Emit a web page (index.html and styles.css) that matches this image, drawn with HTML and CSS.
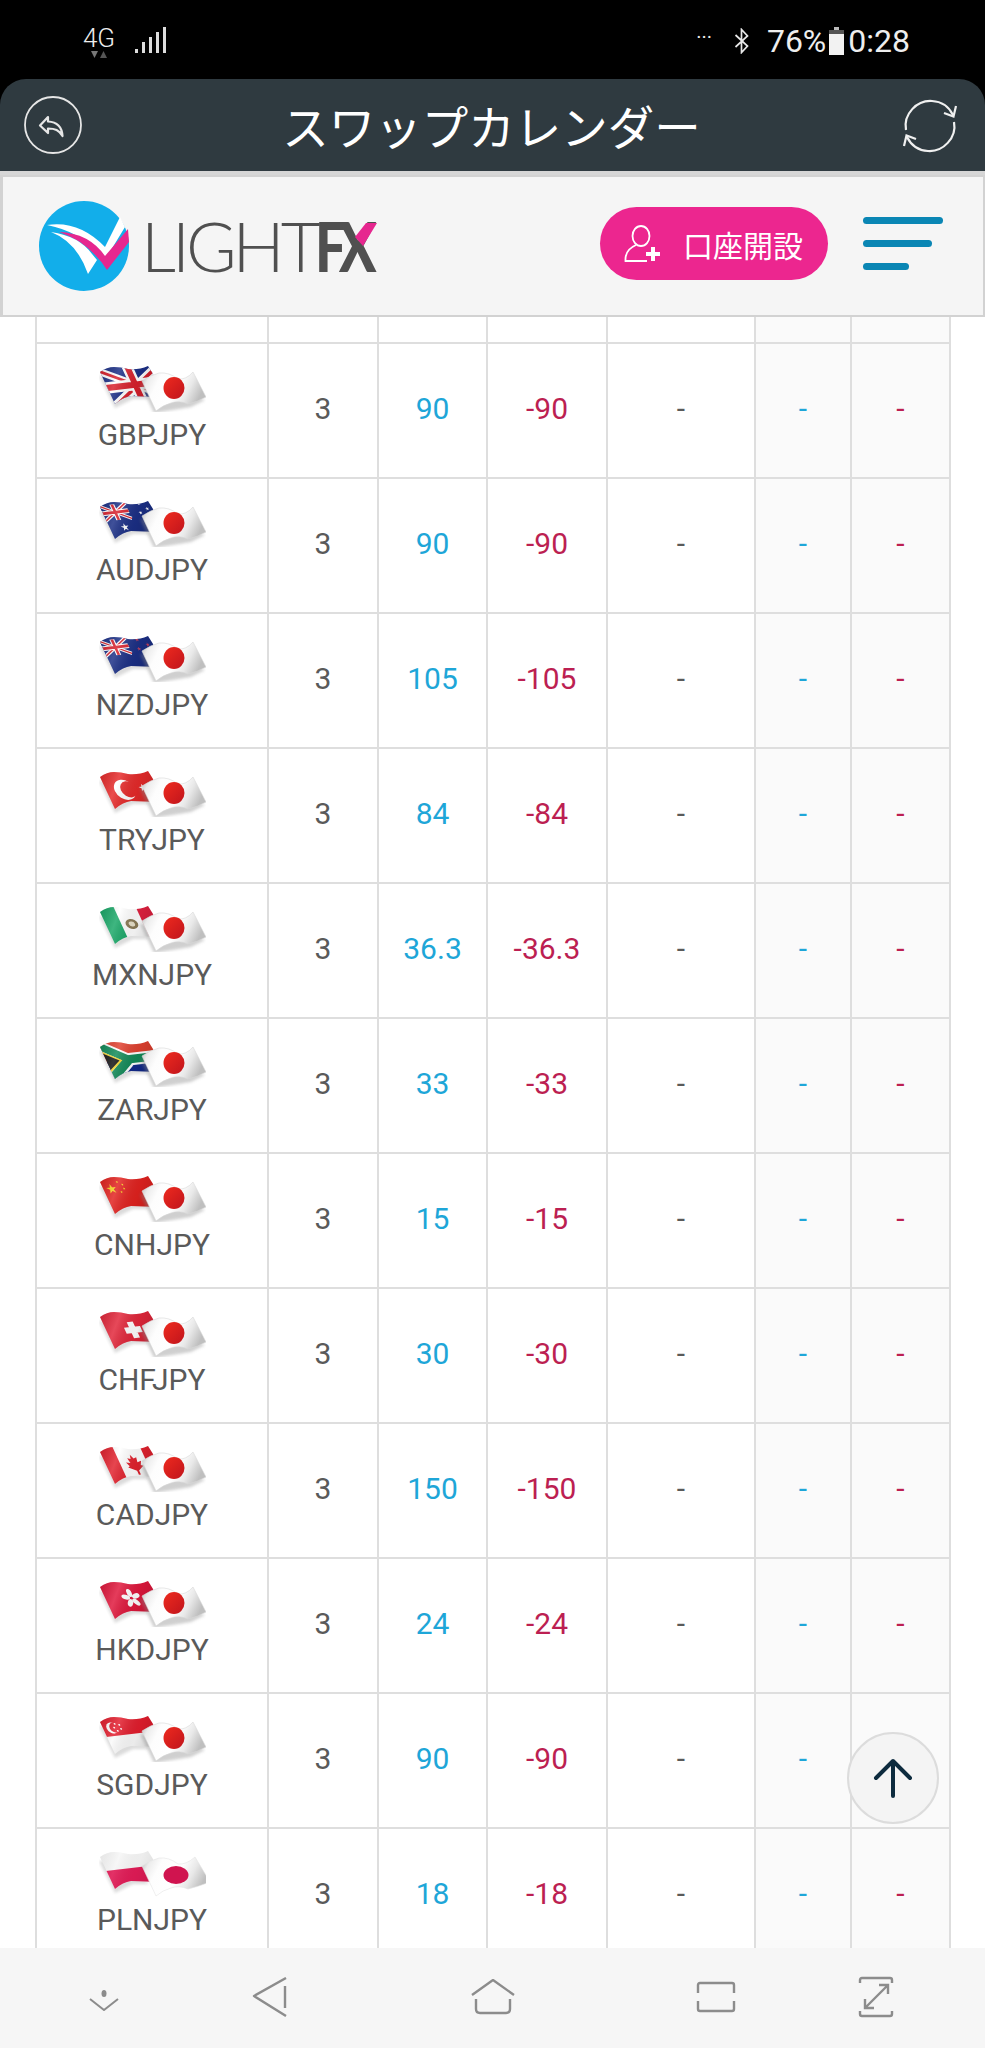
FILE: index.html
```html
<!DOCTYPE html>
<html lang="ja">
<head>
<meta charset="utf-8">
<title>スワップカレンダー</title>
<link rel="stylesheet" href="styles.css">
</head>
<body>
<svg class="defs" aria-hidden="true">
  <defs>
    <path id="st" d="M0-1 .59.81-.95-.31H.95L-.59.81Z"/>
    <clipPath id="lf"><path d="M1 6Q8 1 15 1Q22 1 29 3Q40 4 49 0L54 8L60 31L32 30Q24 31 16 38Z"/></clipPath>
    <linearGradient id="shade" x1="0" y1="0" x2="1" y2="0.25">
      <stop offset="0" stop-color="#000" stop-opacity=".12"/>
      <stop offset=".35" stop-color="#fff" stop-opacity=".16"/>
      <stop offset=".7" stop-color="#000" stop-opacity=".06"/>
      <stop offset="1" stop-color="#000" stop-opacity=".16"/>
    </linearGradient>
    <linearGradient id="jpw" x1="0" y1="0" x2="1" y2="0.3">
      <stop offset="0" stop-color="#b4b4b4"/>
      <stop offset=".14" stop-color="#ececec"/>
      <stop offset=".3" stop-color="#fdfdfd"/>
      <stop offset=".6" stop-color="#fff"/>
      <stop offset=".8" stop-color="#e8e8e8"/>
      <stop offset="1" stop-color="#bfbfbf"/>
    </linearGradient>
    <linearGradient id="jpr" x1="0" y1="0" x2="1" y2="1">
      <stop offset="0" stop-color="#ee2a1e"/>
      <stop offset="1" stop-color="#c0141c"/>
    </linearGradient>
    <filter id="soft" x="-10%" y="-20%" width="120%" height="140%"><feGaussianBlur stdDeviation="1.6"/></filter>
    <g id="jack">
      <rect width="24" height="14" fill="#1b2f86"/>
      <path d="M0 0L24 14M24 0L0 14" stroke="#fff" stroke-width="3"/>
      <path d="M0 0L24 14M24 0L0 14" stroke="#d8202c" stroke-width="1.2"/>
      <path d="M12 0V14M0 7H24" stroke="#fff" stroke-width="4.4"/>
      <path d="M12 0V14M0 7H24" stroke="#d8202c" stroke-width="2.4"/>
    </g>
    <g id="f-jp">
      <path d="M41 18L55 47L92 41L106 34L70 20Z" fill="#888" opacity=".4" filter="url(#soft)"/>
      <path d="M43 15Q52 9 60 7Q70 6 79 13Q87 14 94 6L107 31Q98 36 89 38Q80 34 72 37Q64 39 57 45Z" fill="url(#jpw)" stroke="#d8d8d8" stroke-width=".6"/>
      <ellipse cx="75" cy="22" rx="10.500" ry="11" fill="url(#jpr)"/>
    </g>
    <g id="f-jp2">
      <path d="M43 15Q52 9 60 7Q70 6 79 13Q87 14 96 6L111 31Q98 36 89 38Q80 34 72 37Q64 39 57 45Z" fill="url(#jpw)" stroke="#e4e4e4" stroke-width=".6"/>
      <ellipse cx="77" cy="24" rx="12.500" ry="9" fill="#d0144f"/>
    </g>
    <path id="lshadow" d="M0 10L16 42L34 33L50 33L30 10Z" fill="#999" opacity=".35" filter="url(#soft)"/>
    <g id="f-gb">
      <use href="#lshadow"/>
      <g clip-path="url(#lf)"><g transform="matrix(1 -.12 .46 1 1 6)">
        <rect x="-5" y="-5" width="75" height="45" fill="#1b2f86"/>
        <path d="M-3 -2L62 36M62 -2L-3 36" stroke="#fff" stroke-width="8"/>
        <path d="M-3 -2L62 36M62 -2L-3 36" stroke="#d8202c" stroke-width="3"/>
        <path d="M28 -5V40M-5 16H70" stroke="#fff" stroke-width="11"/>
        <path d="M28 -5V40M-5 16H70" stroke="#d8202c" stroke-width="6"/>
      </g><rect width="60" height="40" fill="url(#shade)"/></g>
    </g>
    <g id="f-au">
      <use href="#lshadow"/>
      <g clip-path="url(#lf)"><g transform="matrix(1 -.12 .46 1 1 6)">
        <rect x="-5" y="-5" width="75" height="45" fill="#1b2f86"/>
        <use href="#jack" transform="translate(-1 -1) scale(1.1)"/>
        <use href="#st" transform="translate(15 22) scale(4)" fill="#fff"/>
        <use href="#st" transform="translate(38 1) scale(2)" fill="#fff"/>
        <use href="#st" transform="translate(44 7) scale(2)" fill="#fff"/>
        <use href="#st" transform="translate(36 10) scale(2)" fill="#fff"/>
        <use href="#st" transform="translate(42 19) scale(2)" fill="#fff"/>
      </g><rect width="60" height="40" fill="url(#shade)"/></g>
    </g>
    <g id="f-nz">
      <use href="#lshadow"/>
      <g clip-path="url(#lf)"><g transform="matrix(1 -.12 .46 1 1 6)">
        <rect x="-5" y="-5" width="75" height="45" fill="#1b2f86"/>
        <use href="#jack" transform="translate(-1 -1) scale(1.1)"/>
        <use href="#st" transform="translate(36 2) scale(2.2)" fill="#c2405e"/>
        <use href="#st" transform="translate(44 8) scale(2.2)" fill="#c2405e"/>
        <use href="#st" transform="translate(34 11) scale(2.2)" fill="#c2405e"/>
        <use href="#st" transform="translate(38 20) scale(2.2)" fill="#c2405e"/>
      </g><rect width="60" height="40" fill="url(#shade)"/></g>
    </g>
    <g id="f-tr">
      <use href="#lshadow"/>
      <g clip-path="url(#lf)"><g transform="matrix(1 -.12 .46 1 1 6)">
        <rect x="-5" y="-5" width="75" height="45" fill="#e62a2a"/>
        <circle cx="18" cy="15" r="10" fill="#fff"/>
        <circle cx="22" cy="15" r="8" fill="#e62a2a"/>
        <use href="#st" transform="translate(36 15) scale(4)" fill="#fff"/>
      </g><rect width="60" height="40" fill="url(#shade)"/></g>
    </g>
    <g id="f-mx">
      <use href="#lshadow"/>
      <g clip-path="url(#lf)"><g transform="matrix(1 -.12 .46 1 1 6)">
        <rect x="-5" y="-5" width="75" height="45" fill="#fff"/>
        <rect x="-5" y="-5" width="20" height="45" fill="#1aa868"/>
        <rect x="36" y="-5" width="30" height="45" fill="#e0203f"/>
        <ellipse cx="25" cy="15" rx="6" ry="5" fill="#8a7a55"/>
        <ellipse cx="25" cy="15" rx="3" ry="2.4" fill="#e8e0c8"/>
      </g><rect width="60" height="40" fill="url(#shade)"/></g>
    </g>
    <g id="f-za">
      <use href="#lshadow"/>
      <g clip-path="url(#lf)"><g transform="matrix(1 -.12 .46 1 1 6)">
        <rect x="-5" y="-5" width="75" height="22" fill="#e0402f"/>
        <rect x="-5" y="15" width="75" height="25" fill="#122a8c"/>
        <path d="M-4 -3L22 15L-4 33M22 15H70" fill="none" stroke="#fff" stroke-width="12"/>
        <path d="M-4 -3L22 15L-4 33M22 15H70" fill="none" stroke="#128a58" stroke-width="8"/>
        <path d="M-6 2L14 15L-6 28Z" fill="#111" stroke="#f2d22c" stroke-width="1.6"/>
      </g><rect width="60" height="40" fill="url(#shade)"/></g>
    </g>
    <g id="f-cn">
      <use href="#lshadow"/>
      <g clip-path="url(#lf)"><g transform="matrix(1 -.12 .46 1 1 6)">
        <rect x="-5" y="-5" width="75" height="45" fill="#e2221f"/>
        <use href="#st" transform="translate(8 8) scale(5)" fill="#f6d21f"/>
        <use href="#st" transform="translate(16 2) scale(1.3)" fill="#f6d21f"/>
        <use href="#st" transform="translate(20 5) scale(1.3)" fill="#f6d21f"/>
        <use href="#st" transform="translate(20 9) scale(1.3)" fill="#f6d21f"/>
        <use href="#st" transform="translate(16 12) scale(1.3)" fill="#f6d21f"/>
      </g><rect width="60" height="40" fill="url(#shade)"/></g>
    </g>
    <g id="f-ch">
      <use href="#lshadow"/>
      <g clip-path="url(#lf)"><g transform="matrix(1 -.12 .46 1 1 6)">
        <rect x="-5" y="-5" width="75" height="45" fill="#e2263a"/>
        <path d="M26 8V24M18 16H34" stroke="#fff" stroke-width="6"/>
      </g><rect width="60" height="40" fill="url(#shade)"/></g>
    </g>
    <g id="f-ca">
      <use href="#lshadow"/>
      <g clip-path="url(#lf)"><g transform="matrix(1 -.12 .46 1 1 6)">
        <rect x="-5" y="-5" width="75" height="45" fill="#fff"/>
        <rect x="-5" y="-5" width="19" height="45" fill="#e2222e"/>
        <rect x="40" y="-5" width="30" height="45" fill="#e2222e"/>
        <path d="M27 6L29 10L32 9L31 14L35 13L33 17L35 18L29 22L29 26H27L27 22L20 18L22 17L20 13L24 14L23 9L26 10Z" fill="#e2222e"/>
      </g><rect width="60" height="40" fill="url(#shade)"/></g>
    </g>
    <g id="f-hk">
      <use href="#lshadow"/>
      <g clip-path="url(#lf)"><g transform="matrix(1 -.12 .46 1 1 6)">
        <rect x="-5" y="-5" width="75" height="45" fill="#e0173c"/>
        <g fill="#fff" transform="translate(25 14)">
          <ellipse cx="0" cy="-5" rx="2.400" ry="4"/>
          <ellipse cx="5" cy="-1.500" rx="2.400" ry="4" transform="rotate(72 5 -1.500)"/>
          <ellipse cx="3" cy="4.500" rx="2.400" ry="4" transform="rotate(144 3 4.500)"/>
          <ellipse cx="-3" cy="4.500" rx="2.400" ry="4" transform="rotate(216 -3 4.500)"/>
          <ellipse cx="-5" cy="-1.500" rx="2.400" ry="4" transform="rotate(288 -5 -1.500)"/>
        </g>
      </g><rect width="60" height="40" fill="url(#shade)"/></g>
    </g>
    <g id="f-sg">
      <use href="#lshadow"/>
      <g clip-path="url(#lf)"><g transform="matrix(1 -.12 .46 1 1 6)">
        <rect x="-5" y="-5" width="75" height="45" fill="#fafafa"/>
        <rect x="-5" y="-5" width="75" height="20" fill="#e31d2d"/>
        <circle cx="9" cy="7" r="5.500" fill="#fff"/>
        <circle cx="11.500" cy="7" r="5" fill="#e31d2d"/>
        <g fill="#fff"><circle cx="13" cy="3.500" r=".9"/><circle cx="17" cy="5" r=".9"/><circle cx="17" cy="9" r=".9"/><circle cx="13" cy="10.500" r=".9"/><circle cx="11" cy="7" r=".9"/></g>
      </g><rect width="60" height="40" fill="url(#shade)"/></g>
    </g>
    <g id="f-pl">
      <use href="#lshadow"/>
      <g clip-path="url(#lf)"><g transform="matrix(1 -.12 .46 1 1 6)">
        <rect x="-5" y="-5" width="75" height="45" fill="#f6f6f6"/>
        <rect x="-5" y="14" width="75" height="25" fill="#e01b56"/>
      </g><rect width="60" height="40" fill="url(#shade)" opacity=".6"/></g>
    </g>
  </defs>
</svg>

<header class="status">
  <div class="net">
    <div class="net-type"><span class="net-label">4G</span><svg class="net-arrows" viewBox="0 0 18 8"><path d="M1 0H8L4.500 7Z" fill="#777"/><path d="M10 7H17L13.500 0Z" fill="#555"/></svg></div>
    <svg class="signal" viewBox="0 0 31 26"><g fill="#ddd"><rect x="0" y="22" width="3" height="4"/><rect x="7" y="15" width="3" height="11"/><rect x="14" y="10" width="3" height="16"/><rect x="21" y="5" width="3" height="21"/><rect x="28" y="0" width="3" height="26"/></g></svg>
  </div>
  <div class="sys">
    <span class="more">···</span>
    <svg class="bt" viewBox="0 0 20 26"><path d="M3 7L15 18L9 24.500V1.500L15 8L3 19" fill="none" stroke="#e8e8e8" stroke-width="1.700"/></svg>
    <span class="sys-text">76%</span>
    <svg class="batt" viewBox="0 0 17 28"><rect x="6" y="0" width="5" height="3" fill="#bbb"/><rect x="1" y="3" width="15" height="4" fill="#555"/><rect x="1" y="7" width="15" height="21" fill="#f2f2f2"/></svg>
    <span class="sys-text">0:28</span>
  </div>
</header>

<div class="titlebar">
  <svg class="back" viewBox="0 0 58 58"><circle cx="29" cy="29" r="28" fill="none" stroke="#e6e6e6" stroke-width="1.800"/><path d="M24 21L16 29.500L24 37V32.500C31 32.500 35 34 38.500 40C38 32 34 26 24 25.500Z" fill="none" stroke="#e6e6e6" stroke-width="2.200" stroke-linejoin="round"/></svg>
  <h1 class="title">スワップカレンダー</h1>
  <svg class="reload" viewBox="0 0 58 56"><g fill="none" stroke="#f0f0f0" stroke-width="2.200"><path d="M5 32C2 16 16 2 31 3C41 3.500 48 9 52 17"/><path d="M53 24C56 40 42 54 27 53C17 52.500 10 47 6 39"/><path d="M55 8L52.500 18.500L43 15"/><path d="M3 48L5.500 37.500L15 41"/></g></svg>
</div>

<div class="brandbar">
  <svg class="logo" viewBox="0 0 350 92">
    <circle cx="45" cy="46" r="45" fill="#12aeea"/>
    <path d="M8 25Q40 20 66 47L81 17L86 27L66 60Q44 32 8 25Z" fill="#fff"/>
    <path d="M20 32Q50 33 66 56L89 29L90 42L68 70Q50 42 20 32Z" fill="#e6278f"/>
    <path d="M12 32Q38 42 49 74L58 60L53 54Q40 36 12 32Z" fill="#fff"/>
    <text class="logo-light" x="102" y="72">LIGHT</text>
    <text class="logo-fx" transform="translate(276 72) scale(.8 1)">FX</text>
    <path d="M327 23H338L324 46L316 37Z" fill="#e6278f"/>
  </svg>
  <div class="brand-actions">
    <a class="open-btn">
      <svg class="person" viewBox="0 0 38 38"><g fill="none" stroke="#fff" stroke-width="1.800"><ellipse cx="17" cy="11" rx="8.500" ry="10"/><path d="M12 20C5 23 1 28 1.500 36H23"/></g><path d="M29 22V36M22 29H36" stroke="#fff" stroke-width="4"/></svg>
      <span>口座開設</span>
    </a>
    <div class="menu"><i class="bar bar-l"></i><i class="bar bar-m"></i><i class="bar bar-s"></i></div>
  </div>
</div>

<main class="content">
  <table class="swap">
    <colgroup><col class="c1"><col class="c2"><col class="c3"><col class="c4"><col class="c5"><col class="c6"><col class="c7"></colgroup>
    <tbody>
      <tr class="stub"><td></td><td></td><td></td><td></td><td></td><td class="alt"></td><td class="alt"></td></tr>
      <tr><td class="pair"><svg class="flag" viewBox="0 0 107 46"><use href="#f-gb"/><use href="#f-jp"/></svg><div class="pair-name">GBPJPY</div></td><td>3</td><td class="pos">90</td><td class="neg">-90</td><td>-</td><td class="alt pos">-</td><td class="alt neg">-</td></tr>
      <tr><td class="pair"><svg class="flag" viewBox="0 0 107 46"><use href="#f-au"/><use href="#f-jp"/></svg><div class="pair-name">AUDJPY</div></td><td>3</td><td class="pos">90</td><td class="neg">-90</td><td>-</td><td class="alt pos">-</td><td class="alt neg">-</td></tr>
      <tr><td class="pair"><svg class="flag" viewBox="0 0 107 46"><use href="#f-nz"/><use href="#f-jp"/></svg><div class="pair-name">NZDJPY</div></td><td>3</td><td class="pos">105</td><td class="neg">-105</td><td>-</td><td class="alt pos">-</td><td class="alt neg">-</td></tr>
      <tr><td class="pair"><svg class="flag" viewBox="0 0 107 46"><use href="#f-tr"/><use href="#f-jp"/></svg><div class="pair-name">TRYJPY</div></td><td>3</td><td class="pos">84</td><td class="neg">-84</td><td>-</td><td class="alt pos">-</td><td class="alt neg">-</td></tr>
      <tr><td class="pair"><svg class="flag" viewBox="0 0 107 46"><use href="#f-mx"/><use href="#f-jp"/></svg><div class="pair-name">MXNJPY</div></td><td>3</td><td class="pos">36.3</td><td class="neg">-36.3</td><td>-</td><td class="alt pos">-</td><td class="alt neg">-</td></tr>
      <tr><td class="pair"><svg class="flag" viewBox="0 0 107 46"><use href="#f-za"/><use href="#f-jp"/></svg><div class="pair-name">ZARJPY</div></td><td>3</td><td class="pos">33</td><td class="neg">-33</td><td>-</td><td class="alt pos">-</td><td class="alt neg">-</td></tr>
      <tr><td class="pair"><svg class="flag" viewBox="0 0 107 46"><use href="#f-cn"/><use href="#f-jp"/></svg><div class="pair-name">CNHJPY</div></td><td>3</td><td class="pos">15</td><td class="neg">-15</td><td>-</td><td class="alt pos">-</td><td class="alt neg">-</td></tr>
      <tr><td class="pair"><svg class="flag" viewBox="0 0 107 46"><use href="#f-ch"/><use href="#f-jp"/></svg><div class="pair-name">CHFJPY</div></td><td>3</td><td class="pos">30</td><td class="neg">-30</td><td>-</td><td class="alt pos">-</td><td class="alt neg">-</td></tr>
      <tr><td class="pair"><svg class="flag" viewBox="0 0 107 46"><use href="#f-ca"/><use href="#f-jp"/></svg><div class="pair-name">CADJPY</div></td><td>3</td><td class="pos">150</td><td class="neg">-150</td><td>-</td><td class="alt pos">-</td><td class="alt neg">-</td></tr>
      <tr><td class="pair"><svg class="flag" viewBox="0 0 107 46"><use href="#f-hk"/><use href="#f-jp"/></svg><div class="pair-name">HKDJPY</div></td><td>3</td><td class="pos">24</td><td class="neg">-24</td><td>-</td><td class="alt pos">-</td><td class="alt neg">-</td></tr>
      <tr><td class="pair"><svg class="flag" viewBox="0 0 107 46"><use href="#f-sg"/><use href="#f-jp"/></svg><div class="pair-name">SGDJPY</div></td><td>3</td><td class="pos">90</td><td class="neg">-90</td><td>-</td><td class="alt pos">-</td><td class="alt neg">-</td></tr>
      <tr><td class="pair"><svg class="flag" viewBox="0 0 107 46"><use href="#f-pl"/><use href="#f-jp2"/></svg><div class="pair-name">PLNJPY</div></td><td>3</td><td class="pos">18</td><td class="neg">-18</td><td>-</td><td class="alt pos">-</td><td class="alt neg">-</td></tr>
    </tbody>
  </table>
  <a class="to-top"><svg viewBox="0 0 40 40"><path d="M20 3V38M3 20L20 3L37 20" fill="none" stroke="#0d2b3e" stroke-width="4" stroke-linecap="round" stroke-linejoin="round"/></svg></a>
</main>

<nav class="softkeys">
  <svg class="key key-a" viewBox="0 0 30 21"><ellipse cx="15" cy="3.500" rx="2.500" ry="3.500" fill="#8c8c8c"/><path d="M1 9L15 20L29 9" fill="none" stroke="#8c8c8c" stroke-width="2"/></svg>
  <svg class="key key-b" viewBox="0 0 36 40"><path d="M34 1L2 19L34 39" fill="none" stroke="#8c8c8c" stroke-width="2.400" stroke-linejoin="round"/><path d="M33 9V31" stroke="#8c8c8c" stroke-width="2.400"/></svg>
  <svg class="key key-c" viewBox="0 0 44 36"><path d="M1 16L22 1L43 16" fill="none" stroke="#8c8c8c" stroke-width="2.400"/><path d="M5 20V30Q5 34 9 34H35Q39 34 39 30V20" fill="none" stroke="#8c8c8c" stroke-width="2.400"/></svg>
  <svg class="key key-d" viewBox="0 0 40 32"><path d="M2 12V4Q2 2 4 2H36Q38 2 38 4V12M2 20V28Q2 30 4 30H36Q38 30 38 28V20" fill="none" stroke="#8c8c8c" stroke-width="2.400"/></svg>
  <svg class="key key-e" viewBox="0 0 36 42"><path d="M2 7V4Q2 2 4 2H32Q34 2 34 4V7M2 35V38Q2 40 4 40H32Q34 40 34 38V35" fill="none" stroke="#8c8c8c" stroke-width="2.400"/><path d="M30 9L7 32M21 9H30V18M7 23V32H16" fill="none" stroke="#8c8c8c" stroke-width="2.400"/></svg>
</nav>
</body>
</html>
```

FILE: styles.css
```css
* { box-sizing: border-box; }
html, body { margin: 0; padding: 0; }
body {
  width: 985px;
  height: 2048px;
  overflow: hidden;
  background: #000;
  display: flex;
  flex-direction: column;
  font-family: Roboto, "Noto Sans CJK JP", sans-serif;
}
.defs { display: block; width: 0; height: 0; }

/* status bar */
.status {
  height: 79px;
  flex: none;
  display: flex;
  justify-content: space-between;
  padding: 25px 75px 0 83px;
  color: #eee;
}
.net { display: flex; gap: 20px; align-items: flex-start; }
.net-type { display: flex; flex-direction: column; align-items: center; width: 32px; }
.net-label { font-size: 26px; line-height: 26px; font-weight: 300; }
.net-arrows { width: 18px; height: 8px; }
.signal { width: 31px; height: 26px; margin-top: 2px; }
.sys { display: flex; align-items: center; height: 32px; }
.more { font-size: 20px; line-height: 16px; margin: -8px 20px 0 0; }
.bt { width: 21px; height: 26px; margin-right: 14px; }
.sys-text { font-size: 32px; line-height: 32px; }
.batt { width: 17px; height: 28px; margin: 0 3px 0 2px; }

/* title bar */
.titlebar {
  height: 96px;
  flex: none;
  background: #2f3a40;
  border-radius: 26px 26px 0 0;
  border-bottom: 4px solid #d6d6d6;
  display: flex;
  align-items: center;
  justify-content: space-between;
  padding: 0 26px 0 24px;
}
.back { width: 58px; height: 58px; }
.reload { width: 58px; height: 56px; margin-top: 2px; }
.title {
  margin: 0;
  color: #fff;
  font-family: "Noto Sans CJK JP", sans-serif;
  font-size: 46.500px;
  font-weight: 400;
  line-height: 60px;
}

/* brand bar */
.brandbar {
  height: 142px;
  flex: none;
  background: #f5f5f5;
  border: 2px solid #d2d2d2;
  border-left-width: 3px;
  display: flex;
  align-items: center;
  justify-content: space-between;
  padding: 0 40px 0 36px;
}
.logo { width: 350px; height: 92px; }
.logo-light { font-family: Lato, sans-serif; font-weight: 300; font-size: 69px; letter-spacing: -4px; fill: #505050; }
.logo-fx { font-family: Lato, sans-serif; font-weight: 900; font-size: 69px; letter-spacing: -9px; fill: #505050; }
.brand-actions { display: flex; align-items: center; gap: 35px; padding-bottom: 5px; }
.open-btn {
  width: 228px;
  height: 73px;
  border-radius: 37px;
  background: #ec268f;
  color: #fff;
  display: flex;
  align-items: center;
  padding-left: 24px;
  gap: 21px;
  font-family: "Noto Sans CJK JP", sans-serif;
  font-size: 30px;
}
.person { width: 38px; height: 38px; }
.menu { display: flex; flex-direction: column; gap: 16px; width: 80px; }
.bar { display: block; height: 7px; border-radius: 4px; background: #0a86b4; }
.bar-l { width: 80px; }
.bar-m { width: 69px; }
.bar-s { width: 46px; }

/* table */
.content {
  flex: 1;
  min-height: 0;
  background: #fff;
  overflow: hidden;
  position: relative;
  padding-left: 35px;
}
.swap {
  width: 914px;
  table-layout: fixed;
  border-collapse: collapse;
  font-size: 30px;
  color: #5a5a5a;
}
.c1 { width: 232px; }
.c2 { width: 110px; }
.c3 { width: 109px; }
.c4 { width: 120px; }
.c5 { width: 148px; }
.c6 { width: 96px; }
.c7 { width: 99px; }
.swap td {
  border: 2px solid #dedede;
  height: 135px;
  padding: 0 0 5px;
  text-align: center;
  vertical-align: middle;
}
.swap .stub td { height: 26px; border-top: 0; padding: 0; }
.swap td.pair { vertical-align: top; padding: 22px 0 0; }
.flag { display: block; width: 107px; height: 46px; margin: 0 auto; }
.pair-name { line-height: 34px; margin-top: 6px; }
.alt { background: #fafafa; }
.pos { color: #1ea6d8; }
.neg { color: #bc1f52; }

.to-top {
  position: absolute;
  left: 847px;
  top: 1415px;
  width: 92px;
  height: 92px;
  border-radius: 50%;
  background: #f4f4f4;
  border: 2px solid #dcdcdc;
  display: flex;
  align-items: center;
  justify-content: center;
}
.to-top svg { width: 40px; height: 40px; }

/* soft keys */
.softkeys {
  height: 100px;
  flex: none;
  background: #f6f6f6;
  display: grid;
  grid-template-columns: 208px 124px 322px 124px 196px;
  align-items: center;
  justify-items: center;
}
.key-a { width: 30px; height: 21px; margin-top: 4px; }
.key-b { width: 36px; height: 40px; margin-top: -2px; }
.key-c { width: 44px; height: 36px; margin-top: -2px; }
.key-d { width: 40px; height: 32px; margin-top: -2px; }
.key-e { width: 36px; height: 42px; margin-top: -2px; }
```
